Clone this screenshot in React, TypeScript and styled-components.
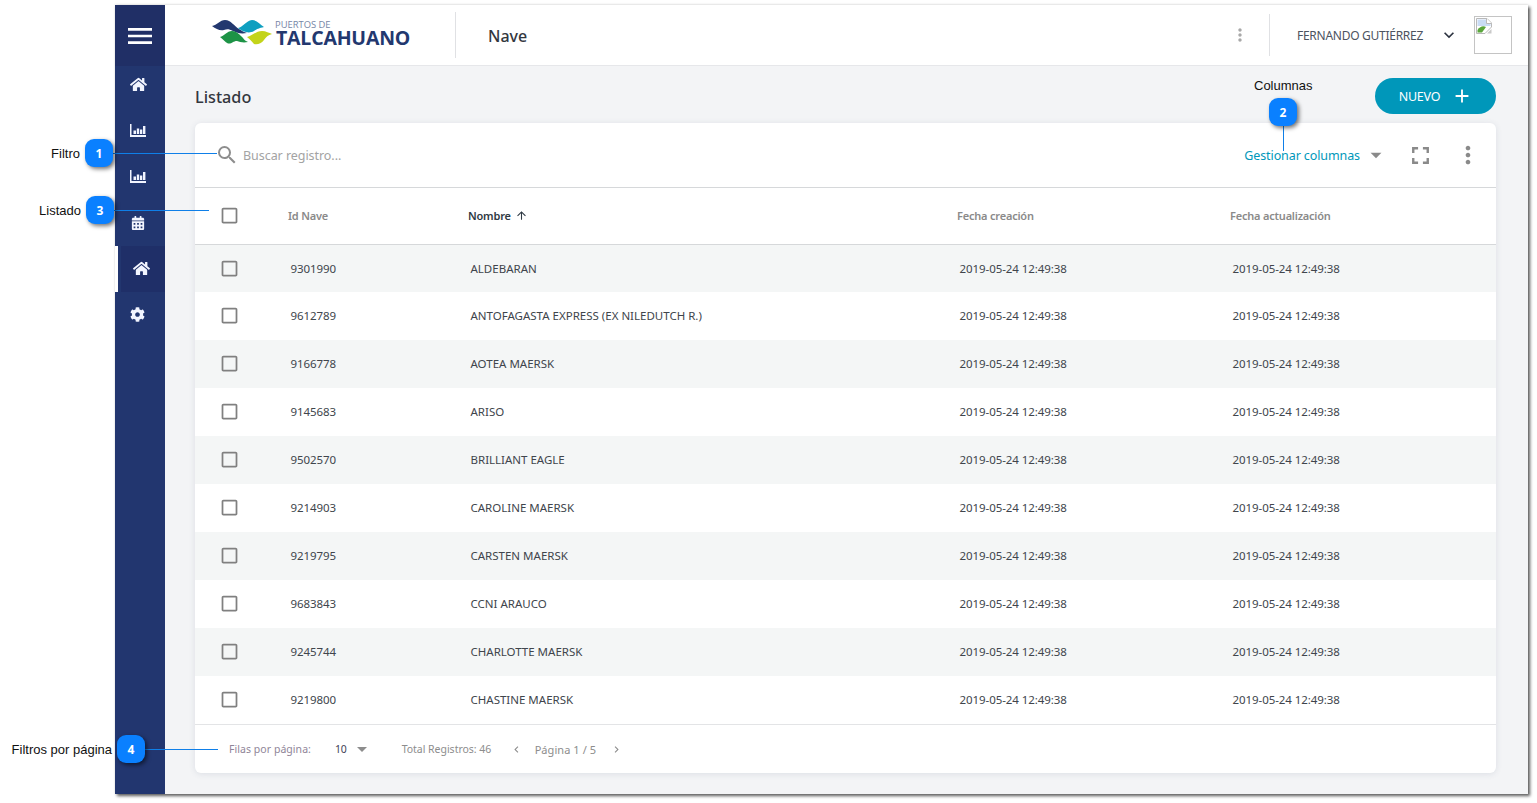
import React from "react";
import styled, { createGlobalStyle } from "styled-components";
import { FaHome, FaCalendarAlt, FaCog } from "react-icons/fa";
import {
  MdSearch, MdFullscreen, MdMoreVert, MdArrowDropDown, MdCheckBoxOutlineBlank,
  MdArrowUpward, MdAdd, MdKeyboardArrowDown, MdChevronLeft, MdChevronRight, MdMenu,
} from "react-icons/md";

const Global = createGlobalStyle`
  html, body { margin: 0; padding: 0; background: #fff; }
  body { font-family: "Noto Sans", "Open Sans", sans-serif; color: #3a3f47; }
  * { box-sizing: border-box; }
`;

const UI = `"Noto Sans", "Open Sans", sans-serif`;

const Page = styled.div`
  position: relative;
  width: 1537px;
  height: 803px;
  padding: 5px 9px 9px 115px;
  overflow: hidden;
`;
const Frame = styled.div`
  display: flex;
  height: 789px;
  background: #f3f4f6;
  box-shadow: 2px 2px 3px rgba(0, 0, 0, 0.65), 0 -1px 2px rgba(0, 0, 0, 0.08);
`;
const Sidebar = styled.aside`
  flex: 0 0 50px;
  display: flex;
  flex-direction: column;
  background: #22366f;
`;
const Burger = styled.div`
  flex: 0 0 61px;
  display: flex;
  align-items: center;
  justify-content: center;
  background: #202f66;
  color: #fff;
  position: relative;
  z-index: 1;
`;
const Nav = styled.nav`
  display: flex;
  flex-direction: column;
  margin-top: -4px;
`;
const NavItem = styled.div<{ $active?: boolean }>`
  height: 46px;
  display: flex;
  align-items: center;
  padding-left: ${(p) => (p.$active ? "18px" : "15px")};
  padding-bottom: 1px;
  color: #f2f5ff;
  ${(p) =>
    p.$active
      ? `background: linear-gradient(to right, #fff 0 3px, #22366f 3px 6px, #1f2f68 6px);`
      : ""}
`;
const CalendarSlot = styled.span`
  display: flex;
  margin-left: 1px;
`;
const Main = styled.div`
  flex: 1;
  min-width: 0;
  display: flex;
  flex-direction: column;
`;
const Header = styled.header`
  flex: 0 0 61px;
  display: flex;
  align-items: center;
  background: #fff;
  border-bottom: 1px solid #e6e7ea;
`;
const LogoArea = styled.div`
  flex: 0 0 291px;
  height: 46px;
  display: flex;
  align-items: center;
  gap: 3px;
  padding: 0 0 5px 47px;
  border-right: 1px solid #e0e1e4;
`;
const LogoText = styled.div`
  display: flex;
  flex-direction: column;
  gap: 1px;
  color: #23386f;
  font-family: "Open Sans", sans-serif;
`;
const LogoTop = styled.span`
  font-size: 9.4px;
  line-height: 9px;
  font-weight: 400;
  color: #7685a6;
`;
const LogoBottom = styled.span`
  font-size: 19.5px;
  line-height: 15px;
  font-weight: 700;
  letter-spacing: -0.2px;
  margin-left: 1px;
`;
const PageName = styled.div`
  margin-left: 32px;
  padding-top: 1px;
  font-family: ${UI};
  font-size: 16px;
  font-weight: 500;
  color: #33373e;
  flex: 1;
`;
const HeaderDots = styled.div`
  width: 30px;
  display: flex;
  justify-content: center;
  color: #a8a8a8;
  margin-right: 14px;
`;
const UserArea = styled.div`
  flex: 0 0 205px;
  height: 42px;
  padding-left: 27px;
  display: flex;
  align-items: center;
  border-left: 1px solid #e0e1e4;
  font-size: 12px;
  letter-spacing: -0.27px;
  color: #4c5360;
`;
const UserName = styled.span`
  width: 142px;
  white-space: nowrap;
`;
const UserChevron = styled.span`
  display: flex;
  color: #2c3340;
`;
const Avatar = styled.div`
  flex: 0 0 38px;
  height: 38px;
  border: 1px solid #c4c4c4;
  padding: 1px;
  margin-right: 16px;
  display: flex;
  align-items: flex-start;
`;
const Content = styled.main`
  flex: 1;
  display: flex;
  flex-direction: column;
  padding: 12px 32px 21px 30px;
  min-height: 0;
`;
const TitleRow = styled.div`
  flex: 0 0 45px;
  display: flex;
  justify-content: space-between;
  align-items: flex-start;
`;
const Title = styled.h1`
  margin: 8px 0 0;
  font-size: 16.2px;
  font-weight: 500;
  line-height: 22px;
  color: #33373e;
`;
const NewButton = styled.button`
  width: 121px;
  height: 36px;
  border: 0;
  border-radius: 18px;
  background: #0097ba;
  color: #fff;
  font-family: ${UI};
  font-size: 12.5px;
  letter-spacing: -0.2px;
  display: flex;
  align-items: center;
  justify-content: center;
  gap: 11px;
  padding: 0 0 0 1px;
`;
const Card = styled.section`
  flex: 1;
  min-height: 0;
  display: flex;
  flex-direction: column;
  background: #fff;
  border-radius: 6px;
  box-shadow: 0 1px 6px rgba(60, 70, 110, 0.12);
  overflow: hidden;
`;
const Toolbar = styled.div`
  flex: 0 0 65px;
  display: flex;
  align-items: center;
  padding: 0 11px 0 20px;
  border-bottom: 1px solid #d6d8da;
  color: #8d8d8d;
`;
const SearchLabel = styled.span`
  margin-left: 4px;
  font-size: 12.5px;
  letter-spacing: -0.05px;
  color: #a3a3a3;
  flex: 1;
`;
const ColumnsLink = styled.span`
  font-size: 12.5px;
  letter-spacing: -0.1px;
  color: #0097ba;
  margin-right: 3px;
`;
const ToolIcon = styled.span<{ $w: number }>`
  display: flex;
  justify-content: center;
  width: ${(p) => p.$w}px;
  color: #8a8a8a;
`;
const COLS = "93px 180px 489px 273px 1fr";
const HeadRow = styled.div`
  flex: 0 0 57px;
  display: grid;
  grid-template-columns: ${COLS};
  align-items: center;
  border-bottom: 1px solid #d6d8da;
  padding-bottom: 1px;
`;
const HeadCell = styled.div<{ $dark?: boolean }>`
  font-size: 11px;
  font-weight: 600;
  letter-spacing: -0.2px;
  display: flex;
  align-items: center;
  gap: 4px;
  color: ${(p) => (p.$dark ? "#2f3a44" : "#8a8a8a")};
`;
const CheckCell = styled.div`
  display: flex;
  padding-left: 24px;
  color: #808080;
`;
const Rows = styled.div`
  display: flex;
  flex-direction: column;
  border-bottom: 1px solid #e3e4e6;
`;
const Row = styled.div<{ $odd: boolean; $first: boolean }>`
  height: ${(p) => (p.$first ? 47 : 48)}px;
  padding-bottom: ${(p) => (p.$first ? 0 : 2)}px;
  display: grid;
  grid-template-columns: ${COLS};
  align-items: center;
  background: ${(p) => (p.$odd ? "#f4f6f6" : "#fff")};
`;
const Cell = styled.div`
  padding-left: 2.5px;
  font-size: 11.5px;
  letter-spacing: -0.07px;
  color: #40454c;
  white-space: nowrap;
`;
const NameCell = styled(Cell)`
  padding-left: 2.5px;
  letter-spacing: 0;
`;
const Footer = styled.div`
  flex: 1;
  display: flex;
  align-items: center;
  padding-left: 34px;
  font-size: 10.5px;
  letter-spacing: -0.2px;
  color: #8d8d8d;
`;
const PerPage = styled.span`
  width: 106px;
  letter-spacing: 0.05px;
  color: #8f8598;
`;
const PageSize = styled.span`
  color: #3f3f55;
`;
const FooterArrow = styled.span<{ $w: number }>`
  display: flex;
  justify-content: center;
  width: ${(p) => p.$w}px;
  color: #8d8d8d;
`;
const Total = styled.span`
  width: 100px;
  margin-left: 25px;
  letter-spacing: -0.02px;
  white-space: nowrap;
`;
const PageInfo = styled.span`
  font-size: 11px;
  letter-spacing: 0.07px;
  width: 63px;
  margin-left: 3px;
  white-space: nowrap;
`;

/* Callout overlays */
const Badge = styled.div<{ $x: number; $y: number }>`
  position: absolute;
  left: ${(p) => p.$x}px;
  top: ${(p) => p.$y}px;
  width: 28px;
  height: 28px;
  border-radius: 9px;
  background: #0a80ff;
  color: #fff;
  font-family: "Open Sans", sans-serif;
  font-weight: 700;
  font-size: 12px;
  display: flex;
  align-items: center;
  justify-content: center;
  box-shadow: 2px 2px 4px rgba(0, 0, 0, 0.55);
  z-index: 3;
`;
const Label = styled.div<{ $right?: number; $left?: number; $y: number }>`
  position: absolute;
  ${(p) => (p.$right !== undefined ? `right: ${1537 - p.$right}px;` : `left: ${p.$left}px;`)}
  top: ${(p) => p.$y}px;
  font-family: "Liberation Sans", Arial, sans-serif;
  font-size: 13px;
  line-height: 16px;
  color: #111;
  white-space: nowrap;
  z-index: 3;
`;
const HLine = styled.div<{ $x: number; $y: number; $w: number }>`
  position: absolute;
  left: ${(p) => p.$x}px;
  top: ${(p) => p.$y}px;
  width: ${(p) => p.$w}px;
  height: 1px;
  background: #0f7fe8;
  z-index: 2;
`;
const VLine = styled.div<{ $x: number; $y: number; $h: number }>`
  position: absolute;
  left: ${(p) => p.$x}px;
  top: ${(p) => p.$y}px;
  width: 1px;
  height: ${(p) => p.$h}px;
  background: #0f7fe8;
  z-index: 2;
`;

const Logo = () => (
  <svg width="60" height="25" viewBox="0 0 60 25" aria-hidden="true">
    <path d="M0 6 C5 5 8 0 13 0 C19 0 22 6 27 9 C30 11 32 12 35 13 C29 14 25 13 21 11 C17 9 15 9 12 10 C8 11 4 9 0 6Z" fill="#23386f" />
    <path d="M26 8 C31 7 34 1 40 0 C45 0 48 5 52 7 C47 8 45 9 42 11 C37 14 31 12 26 8Z" fill="#0e9fc0" />
    <path d="M8 17 C12 16 15 11 20 11 C25 11 28 15 31 18 C32 20 34 21 36 22 C31 23 28 22 25 21 C21 21 20 24 16 23.5 C13 22 11 19 8 17Z" fill="#1d9346" />
    <path d="M35 17 C40 16 44 11 50 11 C54 11 57 13 60 14 C56 15 54 17 52 20 C49 24 45 25 42 24 C40 22 38 19 35 17Z" fill="#c3d41a" />
  </svg>
);

const ChartIcon = () => (
  <svg width="16" height="13" viewBox="0 0 16 13" fill="currentColor" aria-hidden="true">
    <path d="M0 0 H1.5 V11 H16 V13 H0Z" />
    <path d="M3.5 6.5 H6 V10 H3.5Z M6.8 4.5 H9.2 V10 H6.8Z M10 5.5 H12.3 V10 H10Z M13 2 H15.4 V10 H13Z" />
  </svg>
);

const BrokenImage = () => (
  <svg width="16" height="16" viewBox="0 0 16 16" aria-hidden="true">
    <path d="M0.5 0.5 H11 L15.5 5 V9 L9 15.5 H0.5Z" fill="#fff" stroke="#b9b9b9" />
    <path d="M1.5 1.5 H10.5 V5.5 H14.5 V8 H1.5Z" fill="#c9dcf5" />
    <path d="M10.5 0.5 V5.5 H15.5" fill="#fff" stroke="#b9b9b9" />
    <path d="M1.5 14.5 V12 C4 8.5 7 7.5 10 9 L6 14.5Z" fill="#5aa63c" />
    <path d="M11 15.5 L15.5 11 V15.5Z" fill="#c9c9c9" />
  </svg>
);

const rows: [string, string][] = [
  ["9301990", "ALDEBARAN"],
  ["9612789", "ANTOFAGASTA EXPRESS (EX NILEDUTCH R.)"],
  ["9166778", "AOTEA MAERSK"],
  ["9145683", "ARISO"],
  ["9502570", "BRILLIANT EAGLE"],
  ["9214903", "CAROLINE MAERSK"],
  ["9219795", "CARSTEN MAERSK"],
  ["9683843", "CCNI ARAUCO"],
  ["9245744", "CHARLOTTE MAERSK"],
  ["9219800", "CHASTINE MAERSK"],
];
const STAMP = "2019-05-24 12:49:38";

export default function App() {
  return (
    <Page>
      <Global />
      <Frame>
        <Sidebar>
          <Burger>
            <MdMenu size={32} />
          </Burger>
          <Nav>
            <NavItem><FaHome size={17} /></NavItem>
            <NavItem><ChartIcon /></NavItem>
            <NavItem><ChartIcon /></NavItem>
            <NavItem><CalendarSlot><FaCalendarAlt size={14} /></CalendarSlot></NavItem>
            <NavItem $active><FaHome size={17} /></NavItem>
            <NavItem><FaCog size={15} /></NavItem>
          </Nav>
        </Sidebar>
        <Main>
          <Header>
            <LogoArea>
              <Logo />
              <LogoText>
                <LogoTop>PUERTOS DE</LogoTop>
                <LogoBottom>TALCAHUANO</LogoBottom>
              </LogoText>
            </LogoArea>
            <PageName>Nave</PageName>
            <HeaderDots><MdMoreVert size={20} /></HeaderDots>
            <UserArea>
              <UserName>FERNANDO GUTIÉRREZ</UserName>
              <UserChevron><MdKeyboardArrowDown size={20} /></UserChevron>
            </UserArea>
            <Avatar><BrokenImage /></Avatar>
          </Header>
          <Content>
            <TitleRow>
              <Title>Listado</Title>
              <NewButton>NUEVO <MdAdd size={22} /></NewButton>
            </TitleRow>
            <Card>
              <Toolbar>
                <MdSearch size={24} />
                <SearchLabel>Buscar registro...</SearchLabel>
                <ColumnsLink>Gestionar columnas</ColumnsLink>
                <ToolIcon $w={26}><MdArrowDropDown size={26} /></ToolIcon>
                <ToolIcon $w={62}><MdFullscreen size={29} /></ToolIcon>
                <ToolIcon $w={34}><MdMoreVert size={28} /></ToolIcon>
              </Toolbar>
              <HeadRow>
                <CheckCell><MdCheckBoxOutlineBlank size={21} /></CheckCell>
                <HeadCell>Id Nave</HeadCell>
                <HeadCell $dark>Nombre <MdArrowUpward size={13} /></HeadCell>
                <HeadCell>Fecha creación</HeadCell>
                <HeadCell>Fecha actualización</HeadCell>
              </HeadRow>
              <Rows>
                {rows.map(([id, name], i) => (
                  <Row key={id} $odd={i % 2 === 0} $first={i === 0}>
                    <CheckCell><MdCheckBoxOutlineBlank size={21} /></CheckCell>
                    <Cell>{id}</Cell>
                    <NameCell>{name}</NameCell>
                    <Cell>{STAMP}</Cell>
                    <Cell>{STAMP}</Cell>
                  </Row>
                ))}
              </Rows>
              <Footer>
                <PerPage>Filas por página:</PerPage>
                <PageSize>10</PageSize>
                <FooterArrow $w={30}><MdArrowDropDown size={24} /></FooterArrow>
                <Total>Total Registros: 46</Total>
                <FooterArrow $w={30}><MdChevronLeft size={13} /></FooterArrow>
                <PageInfo>Página 1 / 5</PageInfo>
                <FooterArrow $w={38}><MdChevronRight size={13} /></FooterArrow>
              </Footer>
            </Card>
          </Content>
        </Main>
      </Frame>

      <Label $right={80} $y={146}>Filtro</Label>
      <Badge $x={85} $y={139}>1</Badge>
      <HLine $x={113} $y={153} $w={104} />

      <Label $left={1254} $y={78}>Columnas</Label>
      <Badge $x={1269} $y={98}>2</Badge>
      <VLine $x={1283} $y={126} $h={25} />

      <Label $right={81} $y={203}>Listado</Label>
      <Badge $x={86} $y={196}>3</Badge>
      <HLine $x={114} $y={210} $w={95} />

      <Label $right={112} $y={742}>Filtros por página</Label>
      <Badge $x={117} $y={735}>4</Badge>
      <HLine $x={145} $y={749} $w={73} />
    </Page>
  );
}
